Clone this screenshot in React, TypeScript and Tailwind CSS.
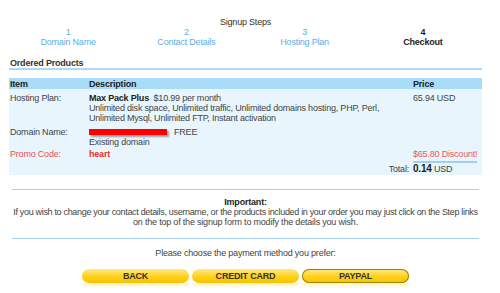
const STEPS = [
  { n: "1", label: "Domain Name" },
  { n: "2", label: "Contact Details" },
  { n: "3", label: "Hosting Plan" },
  { n: "4", label: "Checkout", active: true },
];

const ROW = "grid grid-cols-[80px_324px_1fr]";

function YellowButton({ label, selected }: { label: string; selected?: boolean }) {
  return (
    <div className="flex flex-col">
      <div
        className={`w-[107px] h-[14px] rounded-full flex items-center justify-center text-[9px] font-bold text-[#333] bg-gradient-to-b from-[#ffea7a] via-[#ffd21a] to-[#f7c200] ${
          selected ? "ring-1 ring-inset ring-[#a08400]" : ""
        }`}
      >
        {label}
      </div>
      {/* reflection */}
      <div className="w-[107px] h-[6px] rounded-b-full bg-gradient-to-b from-[#fff0b0] to-white opacity-80" />
    </div>
  );
}

export default function App() {
  return (
    <div className="w-[500px] h-[293px] bg-white text-[#444] text-[9px] leading-[10px] tracking-[-0.2px] font-['Liberation_Sans',Arial,sans-serif] overflow-hidden">
      <div className="ml-[9px] w-[473px]">
        <div className="pt-[17px] text-center text-[#333]">Signup Steps</div>

        {/* step links */}
        <div className="grid grid-cols-4 text-center">
          {STEPS.map((s) => (
            <div key={s.n} className={s.active ? "text-[#222] font-bold" : "text-[#5aaee8]"}>
              <div>{s.n}</div>
              <div>{s.label}</div>
            </div>
          ))}
        </div>

        <div className="mt-[11px] pl-px font-bold text-[#333] border-b-2 border-[#b0d8f2]">Ordered Products</div>

        {/* products table */}
        <div className="mt-[8px]">
          <div className={`${ROW} h-[11px] items-center bg-[#a9dcf9] font-bold text-[#222]`}>
            <div className="pl-px">Item</div>
            <div>Description</div>
            <div>Price</div>
          </div>

          <div className="bg-[#e8f5fd] pt-[4px] pb-px">
            <div className={ROW}>
              <div className="pl-px">Hosting Plan:</div>
              <div>
                <div>
                  <span className="font-bold text-[#222]">Max Pack Plus</span>&nbsp;&nbsp;$10.99 per month
                </div>
                <div>Unlimited disk space, Unlimited traffic, Unlimited domains hosting, PHP, Perl,</div>
                <div>Unlimited Mysql, Unlimited FTP, Instant activation</div>
              </div>
              <div>65.94 USD</div>
            </div>

            <div className={`${ROW} mt-[4px]`}>
              <div className="pl-px">Domain Name:</div>
              <div>
                <div className="flex items-center gap-[7px] h-[10px]">
                  <div className="w-[78px] h-[6px] bg-[#ff0000] shadow-[2px_2px_2px_rgba(0,0,0,0.35)]" />
                  <span>FREE</span>
                </div>
                <div>Existing domain</div>
              </div>
              <div />
            </div>

            <div className={`${ROW} mt-[2px]`}>
              <div className="pl-px text-[#e85050]">Promo Code:</div>
              <div className="font-bold text-[#e83030]">heart</div>
              <div className="text-[#e85a5a]">
                <span className="inline-block border-b-2 border-[#9fd0f0] pb-[2px]">$65.80 Discount!</span>
              </div>
            </div>

            <div className={`${ROW} mt-px items-baseline`}>
              <div />
              <div className="text-right pr-[4px]">Total:</div>
              <div>
                <span className="font-bold text-[#222] text-[10px]">0.14</span> USD
              </div>
            </div>
          </div>
        </div>

        <div className="mx-[3px] mt-[14px] border-t border-[#a4d2f0] pt-[7px] pb-[11px] text-center">
          <div className="font-bold text-[#222]">Important:</div>
          <div className="whitespace-nowrap tracking-[-0.32px]">
            If you wish to change your contact details, username, or the products included in your order you may just click on the Step links
          </div>
          <div>on the top of the signup form to modify the details you wish.</div>
        </div>

        <div className="mx-[3px] border-t border-[#a4d2f0] pt-[9px] text-center">Please choose the payment method you prefer:</div>

        <div className="flex justify-center gap-[3px] mt-[11px]">
          <YellowButton label="BACK" />
          <YellowButton label="CREDIT CARD" />
          <YellowButton label="PAYPAL" selected />
        </div>
      </div>
    </div>
  );
}
